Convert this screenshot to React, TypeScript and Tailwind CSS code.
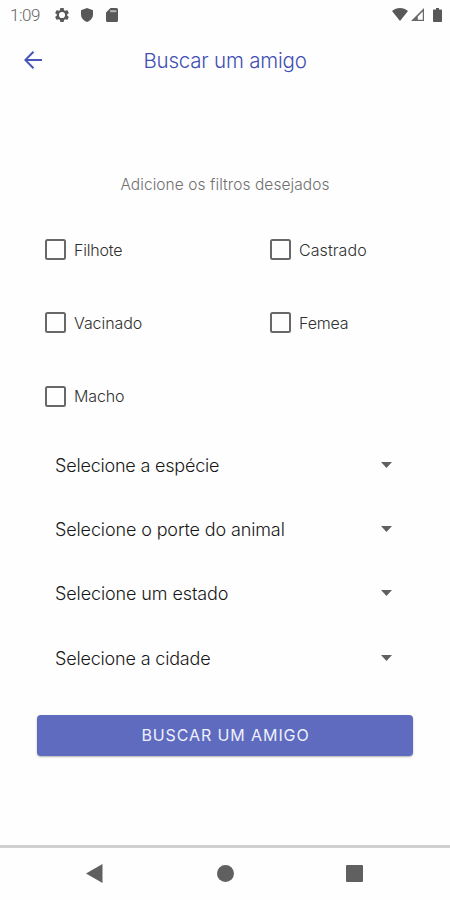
import React from "react";

function Check({ label, spacing }: { label: string; spacing: string }) {
  return (
    <label className="flex h-[73.3px] w-[225px] items-center">
      <span className="mr-[8px] size-[21px] shrink-0 rounded-[2.5px] border-2 border-[#686868]" />
      <span className={`text-[16px] leading-5 font-light whitespace-nowrap text-[#303030] ${spacing}`}>{label}</span>
    </label>
  );
}

function Select({ label, spacing }: { label: string; spacing: string }) {
  return (
    <div className="flex h-[64.2px] items-center justify-between">
      <span className={`pt-[2px] text-[18px] leading-6 font-light whitespace-nowrap text-[#181818] ${spacing}`}>{label}</span>
      <svg className="h-[6px] w-[11px]" viewBox="0 0 11 6">
        <path d="M0 0h11L5.500 6z" fill="#606060" />
      </svg>
    </div>
  );
}

export default function App() {
  return (
    <div className="flex h-[900px] w-[450px] flex-col overflow-hidden bg-[#fefefe] font-['Inter',sans-serif]">
      <div className="flex h-[29px] shrink-0 items-center justify-between pr-[8px] pl-[10px]">
        <div className="flex items-center">
          <span className="w-[45px] font-['Roboto',sans-serif] text-[17px] leading-5 font-light tracking-[-0.5px] text-[#666]">1:09</span>
          <svg className="size-[14px]" viewBox="2 2 20 20" fill="#585858">
            <path fillRule="evenodd" d="M19.430 12.980a7.800 7.800 0 0 0 0-1.960l2.110-1.650a.5.5 0 0 0 .12-.64l-2-3.460a.5.5 0 0 0-.61-.22l-2.490 1a7.300 7.300 0 0 0-1.690-.98l-.38-2.650A.5.5 0 0 0 14 2h-4a.5.5 0 0 0-.49.42l-.38 2.650c-.61.25-1.170.59-1.690.98l-2.490-1a.5.5 0 0 0-.61.22l-2 3.460a.5.5 0 0 0 .12.64l2.110 1.650a7.800 7.800 0 0 0 0 1.960l-2.110 1.650a.5.5 0 0 0-.12.64l2 3.460c.12.22.39.3.61.22l2.490-1c.52.4 1.080.73 1.690.98l.38 2.650c.03.24.24.42.49.42h4c.25 0 .46-.18.49-.42l.38-2.650c.61-.25 1.170-.59 1.690-.98l2.490 1c.23.09.49 0 .61-.22l2-3.460a.5.5 0 0 0-.12-.64zM12 16.400a4.400 4.400 0 1 1 0-8.800 4.400 4.400 0 0 1 0 8.800z" />
          </svg>
          <svg className="ml-[12px] h-[14px] w-[12px]" viewBox="0 0 12 14" fill="#585858">
            <path d="M6 0l6 2.300v4.200c0 3.400-2.500 6.400-6 7.500-3.500-1.100-6-4.100-6-7.500V2.300z" />
          </svg>
          <svg className="ml-[13px] h-[14px] w-[12px]" viewBox="0 0 12 14" fill="#585858">
            <path d="M4.500 0h6A1.500 1.500 0 0 1 12 1.500v11a1.500 1.500 0 0 1-1.500 1.500h-9A1.500 1.500 0 0 1 0 12.500V4.500z" />
            <path d="M4 2.200h6.400v2H4z" fill="#b4b4b4" />
          </svg>
        </div>
        <div className="flex items-center">
          <svg className="h-[13px] w-[16px]" viewBox="0 0 16 13" fill="#585858">
            <path d="M0 3C4.700-1 11.300-1 16 3L8 13z" />
          </svg>
          <svg className="ml-[3px] h-[13px] w-[13px]" viewBox="0 0 13 13" fill="#686868">
            <path fillRule="evenodd" d="M13 0v13H0zM11.800 3.500L6.800 8.500v3.300h5z" />
          </svg>
          <svg className="ml-[9px] h-[14px] w-[9px]" viewBox="0 0 9 14" fill="#585858">
            <path d="M3 0h3v1.400h2.200a.8.8 0 0 1 .8.8v11a.8.8 0 0 1-.8.8H.8a.8.8 0 0 1-.8-.8v-11a.8.8 0 0 1 .8-.8H3z" />
          </svg>
        </div>
      </div>

      <header className="grid h-[61px] shrink-0 grid-cols-[50px_350px_50px] items-center">
        <svg className="ml-[24px] h-[18px] w-[18px]" viewBox="0 0 18 18" fill="none" stroke="#4856b8" strokeWidth="2">
          <path d="M18 9H1.500M9.500.800L1.300 9l8.200 8.200" />
        </svg>
        <h1 className="pt-[2px] text-center text-[20.5px] leading-7 font-light tracking-[-0.2px] text-[#3f4fb4]">Buscar um amigo</h1>
      </header>

      <p className="mt-[85px] h-5 shrink-0 text-center text-[15.5px] leading-5 font-light tracking-[0.07px] text-[#707070]">Adicione os filtros desejados</p>

      <div className="mt-[18px] flex w-[495px] shrink-0 flex-wrap pl-[45px]">
        <Check label="Filhote" spacing="tracking-[-0.2px]" />
        <Check label="Castrado" spacing="tracking-[0.07px]" />
        <Check label="Vacinado" spacing="tracking-[-0.07px]" />
        <Check label="Femea" spacing="tracking-[-0.15px]" />
        <Check label="Macho" spacing="tracking-[-0.15px]" />
      </div>

      <div className="shrink-0 pr-[58px] pl-[55px]">
        <Select label="Selecione a espécie" spacing="tracking-[-0.2px]" />
        <Select label="Selecione o porte do animal" spacing="tracking-[-0.13px]" />
        <Select label="Selecione um estado" spacing="tracking-[-0.11px]" />
        <Select label="Selecione a cidade" spacing="tracking-[-0.18px]" />
      </div>

      <button className="mx-[37px] mt-[25px] h-[41px] shrink-0 rounded-[4px] bg-[#5e6bbf] pl-[1px] text-[16px] leading-6 tracking-[0.9px] text-[#eef0fc] shadow-[0_1px_2px_rgba(0,0,0,0.3)]">
        BUSCAR UM AMIGO
      </button>

      <nav className="mt-auto flex h-[55px] shrink-0 items-center border-t-[3px] border-[#d0d0d0] pb-[2px] pl-[86px]">
        <svg className="h-[19px] w-[17px]" viewBox="0 0 17 19"><path d="M0 9.500L16.500 0v19z" fill="#606060" /></svg>
        <span className="ml-[114px] size-[17px] rounded-full bg-[#606060]" />
        <span className="ml-[112px] size-[17px] rounded-[1px] bg-[#606060]" />
      </nav>
    </div>
  );
}
